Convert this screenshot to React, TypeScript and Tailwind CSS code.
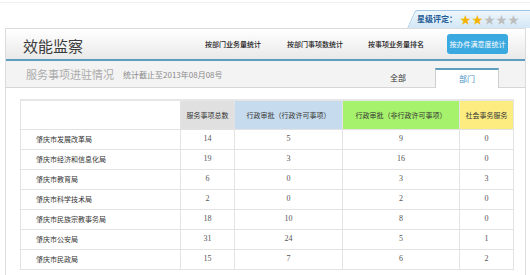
const cjk = "font-['Noto_Sans_CJK_SC','Noto_Sans',sans-serif]"

const rows: [string, number, number, number, number][] = [
  ['肇庆市发展改革局', 14, 5, 9, 0],
  ['肇庆市经济和信息化局', 19, 3, 16, 0],
  ['肇庆市教育局', 6, 0, 3, 3],
  ['肇庆市科学技术局', 2, 0, 2, 0],
  ['肇庆市民族宗教事务局', 18, 10, 8, 0],
  ['肇庆市公安局', 31, 24, 5, 1],
  ['肇庆市民政局', 15, 7, 6, 2],
]

function StarBadge() {
  return (
    <div className="relative w-[129px] h-[18px]">
      {/* slanted tab background */}
      <div className="absolute inset-0 left-[6px] -skew-x-[24deg] origin-bottom-left rounded-tl-[3px] border-t border-l border-[#9ec6e2] bg-gradient-to-b from-[#eef6fc] to-[#d3e7f6]" />
      <div className="relative flex items-center h-full pl-[16px]">
        <span className="text-[8px] leading-none font-bold text-[#245c95]">星级评定：</span>
        <div className="flex ml-[3px] gap-[1px] text-[11px] leading-none">
          <span className="text-[#f5b400]">★</span>
          <span className="text-[#f5b400]">★</span>
          <span className="text-[#bdbdbd]">★</span>
          <span className="text-[#bdbdbd]">★</span>
          <span className="text-[#bdbdbd]">★</span>
        </div>
      </div>
    </div>
  )
}

export default function App() {
  const num = "font-['Liberation_Serif',serif] text-[8px] text-[#555] text-center"
  return (
    <div className={`w-[530px] h-[275px] overflow-hidden bg-white ${cjk}`}>
      {/* top strip */}
      <div className="h-[26px] border-t border-[#f0f0f0] mt-[2px] flex justify-end items-end">
        <StarBadge />
      </div>

      {/* main panel */}
      <div className="ml-[5px] w-[521px] h-[249px] border-t border-l border-r border-[#dcdcdc]">
        {/* header */}
        <div className="h-[30px] bg-gradient-to-b from-white to-[#e9e9e9] flex items-center justify-between pl-[17px] pr-[17px]">
          <h1 className="text-[15px] leading-none text-[#3a3a3a] pt-[3px]">效能监察</h1>
          <nav className="flex items-center text-[7px] leading-none text-[#222] font-medium">
            <span>按部门业务量统计</span>
            <span className="ml-[26px]">按部门事项数统计</span>
            <span className="ml-[25px]">按事项业务量排名</span>
            <span className="ml-[23px] w-[61px] h-[20px] rounded-[3px] bg-[#3aa9e0] text-white font-normal flex items-center justify-center">
              按办件满意度统计
            </span>
          </nav>
        </div>
        <div className="h-[2px] bg-[#5c9dc0]" />

        {/* sub header */}
        <div className="h-[27px] bg-[#f3f3f3] border-b border-[#d6d6d6] flex items-end justify-between">
          <div className="self-stretch flex items-center pl-[20px] pt-[1px]">
            <span className="text-[11px] leading-none text-[#ababab]">服务事项进驻情况</span>
            <span className="ml-[9px] text-[8px] leading-none text-[#8a8a8a] pt-[1px]">统计截止至2013年08月08号</span>
          </div>
          <div className="flex items-end mr-[26px] -mb-px">
            <div className="w-[60px] h-[20px] flex items-center justify-center text-[8px] text-[#333]">全部</div>
            <div className="ml-[7px] w-[64px] h-[20px] bg-white border-t-2 border-t-[#5c9dc0] border-x border-x-[#cfcfcf] flex items-center justify-center text-[8px] text-[#4a8fc6]">
              部门
            </div>
          </div>
        </div>

        {/* table */}
        <div className="pt-[11px] pl-[14px]">
          <table className="w-[493px] table-fixed border-collapse border-t-2 border-[#e6e6e6]">
            <colgroup>
              <col className="w-[160px]" />
              <col className="w-[54px]" />
              <col className="w-[108px]" />
              <col className="w-[117px]" />
              <col className="w-[54px]" />
            </colgroup>
            <thead>
              <tr className="h-[29px] text-[7px] text-[#333] font-normal">
                <th className="border border-[#e3e3e3] bg-white" />
                <th className="border border-[#e3e3e3] bg-[#e0e0e0] font-normal">服务事项总数</th>
                <th className="border border-[#e3e3e3] bg-[#c6dcee] font-normal">行政审批（行政许可事项）</th>
                <th className="border border-[#e3e3e3] bg-[#a7f26c] font-normal">行政审批（非行政许可事项）</th>
                <th className="border border-[#e3e3e3] bg-[#fdec80] font-normal">社会事务服务</th>
              </tr>
            </thead>
            <tbody>
              {rows.map((r) => (
                <tr key={r[0]} className="h-[20px]">
                  <td className="border border-[#e3e3e3] pl-[15px] text-[7px] text-[#333]">{r[0]}</td>
                  <td className={`border border-[#e3e3e3] ${num}`}>{r[1]}</td>
                  <td className={`border border-[#e3e3e3] ${num}`}>{r[2]}</td>
                  <td className={`border border-[#e3e3e3] ${num}`}>{r[3]}</td>
                  <td className={`border border-[#e3e3e3] ${num}`}>{r[4]}</td>
                </tr>
              ))}
            </tbody>
          </table>
        </div>
      </div>
    </div>
  )
}
